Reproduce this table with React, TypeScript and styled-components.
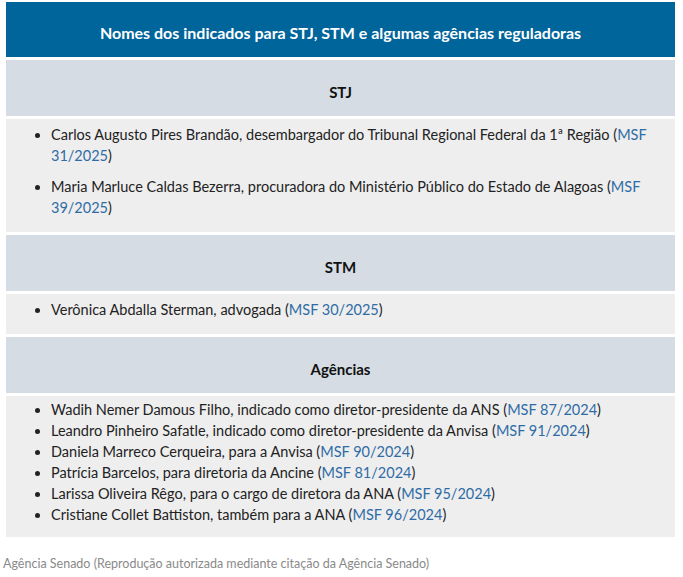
import { Fragment } from "react";
import styled, { createGlobalStyle } from "styled-components";

const GlobalStyle = createGlobalStyle`
    body {
        margin: 0;
        background: #ffffff;
        font-family: Lato, "Noto Sans", sans-serif;
    }
`;

const Page = styled.div`
    padding: 2px 8px 0 6px;
`;

const Table = styled.div`
    display: flex;
    flex-direction: column;
    gap: 3px;
    width: 669px;
`;

const Caption = styled.div`
    height: 55px;
    box-sizing: border-box;
    padding-top: 6px;
    background: #00659b;
    color: #ffffff;
    font-weight: bold;
    font-size: 16px;
    display: flex;
    align-items: center;
    justify-content: center;
`;

const SectionHead = styled.div`
    height: 56px;
    box-sizing: border-box;
    padding-top: 7px;
    background: #d5dce4;
    color: #111111;
    font-weight: bold;
    font-size: 15px;
    display: flex;
    align-items: center;
    justify-content: center;
`;

const SectionBody = styled.div<{ $spaced?: boolean }>`
    background: #eeeeee;
    padding: ${(p) => (p.$spaced ? "5px 16px 14px 29px" : "3px 16px 12px 29px")};
`;

const List = styled.ul<{ $spaced?: boolean }>`
    margin: 0;
    padding-left: 16px;
    color: #222222;
    font-size: 14.5px;
    line-height: 21px;

    li + li {
        margin-top: ${(p) => (p.$spaced ? "10px" : "0")};
    }
`;

const Msf = styled.a`
    color: #2f6ca6;
    text-decoration: none;
`;

const Credit = styled.div`
    margin-top: 19px;
    margin-left: -3px;
    font-size: 12.5px;
    color: #8a8a8a;
`;

type Item = { text: string; msf: string };

const sections: { title: string; spaced?: boolean; items: Item[] }[] = [
    {
        title: "STJ",
        spaced: true,
        items: [
            { text: "Carlos Augusto Pires Brandão, desembargador do Tribunal Regional Federal da 1ª Região", msf: "MSF 31/2025" },
            { text: "Maria Marluce Caldas Bezerra, procuradora do Ministério Público do Estado de Alagoas", msf: "MSF 39/2025" },
        ],
    },
    {
        title: "STM",
        spaced: true,
        items: [{ text: "Verônica Abdalla Sterman, advogada", msf: "MSF 30/2025" }],
    },
    {
        title: "Agências",
        items: [
            { text: "Wadih Nemer Damous Filho, indicado como diretor-presidente da ANS", msf: "MSF 87/2024" },
            { text: "Leandro Pinheiro Safatle, indicado como diretor-presidente da Anvisa", msf: "MSF 91/2024" },
            { text: "Daniela Marreco Cerqueira, para a Anvisa", msf: "MSF 90/2024" },
            { text: "Patrícia Barcelos, para diretoria da Ancine", msf: "MSF 81/2024" },
            { text: "Larissa Oliveira Rêgo, para o cargo de diretora da ANA", msf: "MSF 95/2024" },
            { text: "Cristiane Collet Battiston, também para a ANA", msf: "MSF 96/2024" },
        ],
    },
];

export default function App() {
    return (
        <Page>
            <GlobalStyle />
            <Table>
                <Caption>Nomes dos indicados para STJ, STM e algumas agências reguladoras</Caption>
                {sections.map((s) => (
                    <Fragment key={s.title}>
                        <SectionHead>{s.title}</SectionHead>
                        <SectionBody $spaced={s.spaced}>
                            <List $spaced={s.spaced}>
                                {s.items.map((it) => (
                                    <li key={it.msf}>
                                        {it.text} (<Msf href="#">{it.msf}</Msf>)
                                    </li>
                                ))}
                            </List>
                        </SectionBody>
                    </Fragment>
                ))}
            </Table>
            <Credit>Agência Senado (Reprodução autorizada mediante citação da Agência Senado)</Credit>
        </Page>
    );
}
